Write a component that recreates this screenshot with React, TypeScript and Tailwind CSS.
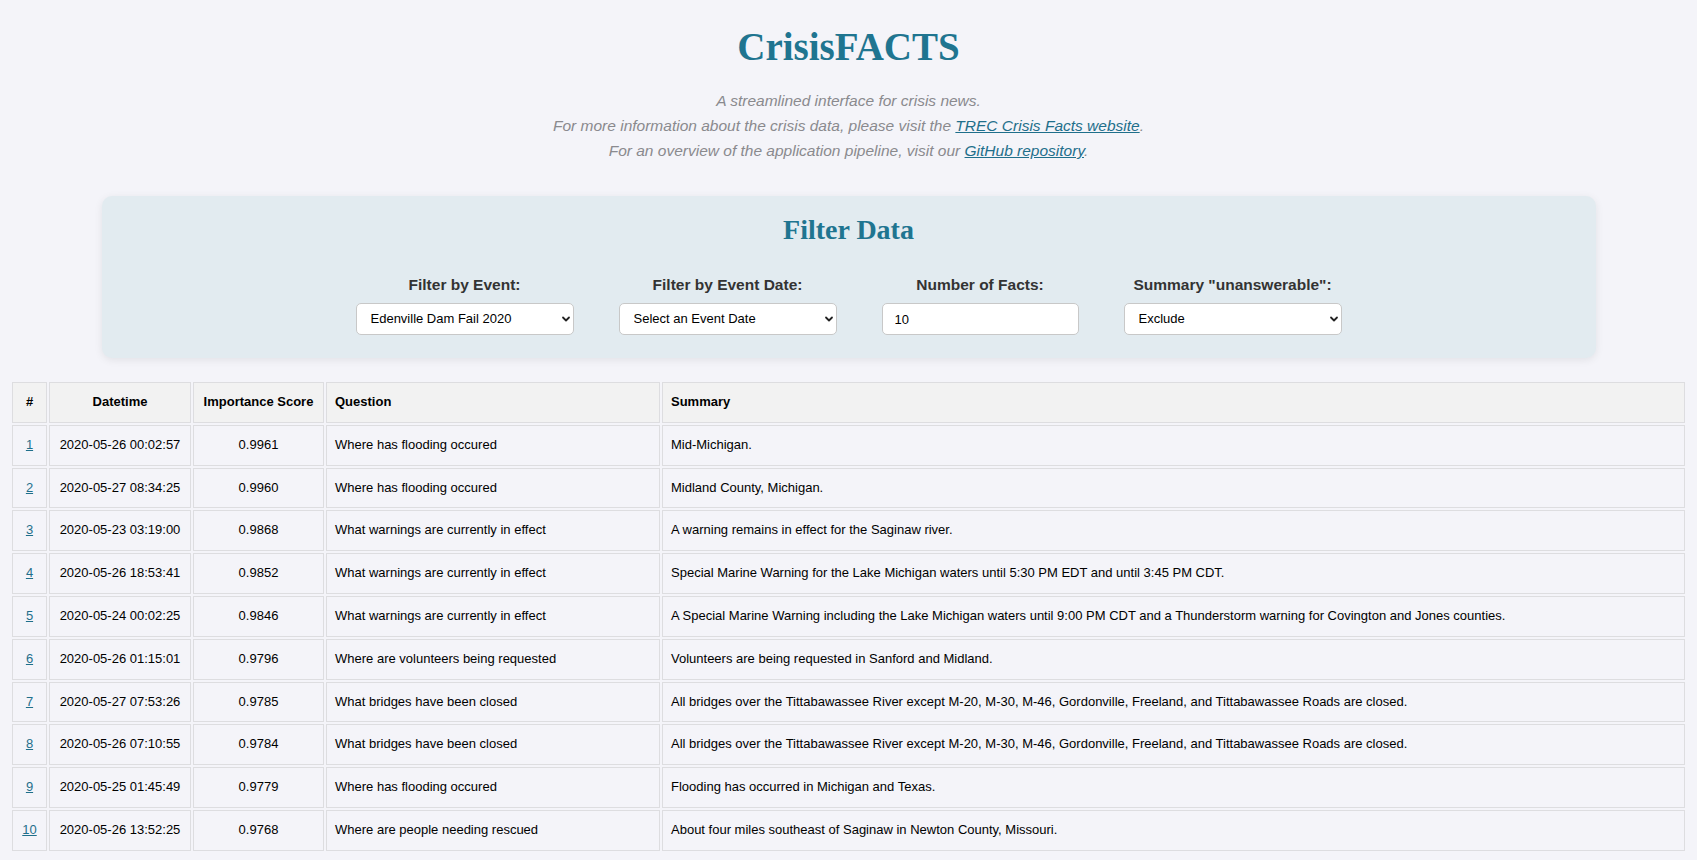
import React from "react";

const rows = [
  ["2020-05-26 00:02:57", "0.9961", "Where has flooding occured", "Mid-Michigan."],
  ["2020-05-27 08:34:25", "0.9960", "Where has flooding occured", "Midland County, Michigan."],
  ["2020-05-23 03:19:00", "0.9868", "What warnings are currently in effect", "A warning remains in effect for the Saginaw river."],
  ["2020-05-26 18:53:41", "0.9852", "What warnings are currently in effect", "Special Marine Warning for the Lake Michigan waters until 5:30 PM EDT and until 3:45 PM CDT."],
  ["2020-05-24 00:02:25", "0.9846", "What warnings are currently in effect", "A Special Marine Warning including the Lake Michigan waters until 9:00 PM CDT and a Thunderstorm warning for Covington and Jones counties."],
  ["2020-05-26 01:15:01", "0.9796", "Where are volunteers being requested", "Volunteers are being requested in Sanford and Midland."],
  ["2020-05-27 07:53:26", "0.9785", "What bridges have been closed", "All bridges over the Tittabawassee River except M-20, M-30, M-46, Gordonville, Freeland, and Tittabawassee Roads are closed."],
  ["2020-05-26 07:10:55", "0.9784", "What bridges have been closed", "All bridges over the Tittabawassee River except M-20, M-30, M-46, Gordonville, Freeland, and Tittabawassee Roads are closed."],
  ["2020-05-25 01:45:49", "0.9779", "Where has flooding occured", "Flooding has occurred in Michigan and Texas."],
  ["2020-05-26 13:52:25", "0.9768", "Where are people needing rescued", "About four miles southeast of Saginaw in Newton County, Missouri."],
];

function Chevron() {
  return (
    <svg
      className="pointer-events-none absolute right-[3px] top-1/2 -translate-y-1/2"
      width="10"
      height="10"
      viewBox="0 0 10 10"
    >
      <path d="M2 3.5 L5 6.5 L8 3.5" fill="none" stroke="#222" strokeWidth="1.8" strokeLinecap="round" strokeLinejoin="round" />
    </svg>
  );
}

function SelectBox({ value }: { value: string }) {
  return (
    <div className="relative w-[218px]">
      <select
        defaultValue={value}
        className="h-[32px] w-full appearance-none rounded-[5px] border border-[#c8c8c8] bg-white pl-[14px] pr-[20px] text-[13px] text-black outline-none"
      >
        <option>{value}</option>
      </select>
      <Chevron />
    </div>
  );
}

const th = "border border-[#dddde0] bg-[#f2f2f2] py-[12px] px-[8px] font-bold leading-[14.8px] text-black";
const td = "border border-[#dddde0] py-[12px] px-[8px] leading-[14.8px] text-black";
const label = "whitespace-nowrap text-[15.5px] font-bold leading-[18px] text-[#333]";

export default function App() {
  return (
    <div className="min-h-[860px] bg-[#f4f4f9] font-['Liberation_Sans',Arial,sans-serif]">
      <header className="pt-[23px] text-center">
        <h1 className="font-['Liberation_Serif','Times_New_Roman',serif] text-[39px] font-bold leading-[48px] text-[#1f7590]">
          CrisisFACTS
        </h1>
        <div className="mt-[17px] text-[15.5px] italic leading-[25px] text-[#8a8a8e]">
          <p>A streamlined interface for crisis news.</p>
          <p>
            For more information about the crisis data, please visit the{" "}
            <a href="#" className="text-[#1f6f8b] underline">TREC Crisis Facts website</a>.
          </p>
          <p>
            For an overview of the application pipeline, visit our{" "}
            <a href="#" className="text-[#1f6f8b] underline">GitHub repository</a>.
          </p>
        </div>
      </header>

      <section className="mx-auto mt-[33px] h-[162px] w-[1494px] rounded-[10px] bg-[#e2ebf0] pt-[17px] shadow-[0_2px_8px_rgba(0,0,0,0.08)]">
        <h2 className="text-center font-['Liberation_Serif','Times_New_Roman',serif] text-[28px] font-bold leading-[34px] text-[#1f7590]">
          Filter Data
        </h2>
        <div className="mt-[29px] flex justify-center gap-[45px]">
          <div className="flex w-[218px] flex-col items-center">
            <label className={label}>Filter by Event:</label>
            <div className="mt-[9px] w-full">
              <SelectBox value="Edenville Dam Fail 2020" />
            </div>
          </div>
          <div className="flex w-[218px] flex-col items-center">
            <label className={label}>Filter by Event Date:</label>
            <div className="mt-[9px] w-full">
              <SelectBox value="Select an Event Date" />
            </div>
          </div>
          <div className="flex w-[197px] flex-col items-center">
            <label className={label}>Number of Facts:</label>
            <input
              type="number"
              defaultValue={10}
              className="mt-[9px] h-[32px] w-[197px] rounded-[5px] border border-[#c8c8c8] bg-white pl-[12px] text-[13px] text-black outline-none [appearance:textfield]"
            />
          </div>
          <div className="flex w-[218px] flex-col items-center">
            <label className={label}>Summary "unanswerable":</label>
            <div className="mt-[9px] w-full">
              <SelectBox value="Exclude" />
            </div>
          </div>
        </div>
      </section>

      <div className="mt-[22px] px-[10px]">
        <table className="w-full table-fixed border-separate border-spacing-[2px] text-[13px]">
          <colgroup>
            <col className="w-[35px]" />
            <col className="w-[142px]" />
            <col className="w-[131px]" />
            <col className="w-[334px]" />
            <col />
          </colgroup>
          <thead>
            <tr>
              <th className={`${th} text-center`}>#</th>
              <th className={`${th} text-center`}>Datetime</th>
              <th className={`${th} text-center`}>Importance Score</th>
              <th className={`${th} text-left`}>Question</th>
              <th className={`${th} text-left`}>Summary</th>
            </tr>
          </thead>
          <tbody>
            {rows.map((r, i) => (
              <tr key={i}>
                <td className={`${td} text-center`}>
                  <a href="#" className="text-[#1f6f8b] underline">{i + 1}</a>
                </td>
                <td className={`${td} text-center`}>{r[0]}</td>
                <td className={`${td} text-center`}>{r[1]}</td>
                <td className={`${td} text-left`}>{r[2]}</td>
                <td className={`${td} text-left`}>{r[3]}</td>
              </tr>
            ))}
          </tbody>
        </table>
      </div>
    </div>
  );
}
